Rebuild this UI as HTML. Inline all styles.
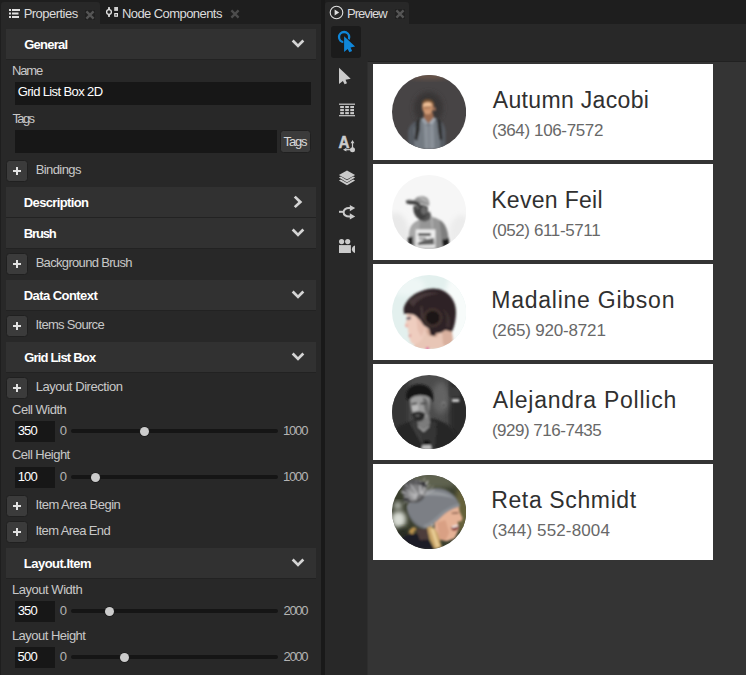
<!DOCTYPE html><html><head><meta charset="utf-8"><title>Properties</title><style>
*{box-sizing:border-box;margin:0;padding:0}
html,body{width:746px;height:675px;overflow:hidden;background:#1e1e1e;font-family:"Liberation Sans",sans-serif;font-size:13px;color:#c8c8c8}
.abs{position:absolute}
.t{position:absolute;white-space:nowrap}
#left{position:absolute;left:1px;top:24px;width:320px;height:651px;background:#282828}
#lefttab{position:absolute;left:1px;top:2px;width:99px;height:23px;background:#282828;border-radius:3px 3px 0 0}
.hdr{position:absolute;left:6px;width:310px;height:31px;background:#313131;border-bottom:1px solid #222}
.hdr svg{position:absolute;left:285px;top:9px}
.plus{position:absolute;left:6px;width:22px;height:22px;background:#3b3b3b;border:1px solid #202020;border-radius:3.5px}
.plus:before{content:"";position:absolute;left:5.8px;top:8.8px;width:8.4px;height:2.4px;background:#e2e2e2}
.plus:after{content:"";position:absolute;left:8.8px;top:5.8px;width:2.4px;height:8.4px;background:#e2e2e2}
.inp{position:absolute;left:15px;background:#171717}
.track{position:absolute;left:71px;width:207px;height:4px;border-radius:2px;background:#151515}
.thumb{position:absolute;width:9px;height:9px;border-radius:4.5px;background:#cccccc;box-shadow:0 0 0 0.8px #1b1b1b}
#divider{position:absolute;left:321px;top:0;width:4px;height:675px;background:#191919}
#right{position:absolute;left:325px;top:24px;width:421px;height:651px;background:#282828}
#righttab{position:absolute;left:325px;top:2px;width:84px;height:23px;background:#282828;border-radius:3px 3px 0 0}
#pv{position:absolute;left:367px;top:61px;width:379px;height:614px;background:#343434;border-left:1px solid #2e2e2e;border-top:1px solid #212121}
.item{position:absolute;left:373px;width:340.2px;height:95.5px;background:#fff}
</style></head><body>
<div id="lefttab"></div>
<div id="left"></div>
<svg class="abs" style="left:9px;top:9px" width="11" height="9" viewBox="0 0 11 9"><g fill="#e0e0e0"><rect x="0" y="0" width="2" height="2"/><rect x="3" y="0" width="8" height="2"/><rect x="0" y="3.5" width="2" height="2"/><rect x="3" y="3.5" width="6.5" height="2"/><rect x="0" y="7" width="2" height="2"/><rect x="3" y="7" width="7" height="2"/></g></svg>
<div id="t1" class="t" style="left:23.64px;top:6.00px;font-size:13px;line-height:16px;color:#dcdcdc;letter-spacing:-0.523px;">Properties</div>
<div class="abs" style="left:85px;top:10px;width:10px;height:10px;background:#212121"></div><svg class="abs" style="left:85px;top:10px" width="10" height="10" viewBox="0 0 10 10"><path d="M1.4 1.4L8.6 8.6M8.6 1.4L1.4 8.6" stroke="#555" stroke-width="2.3" fill="none"/></svg>
<svg class="abs" style="left:105px;top:6px" width="14" height="13" viewBox="105 6 14 13"><circle cx="109" cy="12" r="2.4" fill="none" stroke="#e4e4e4" stroke-width="1.3"/><g fill="#e4e4e4"><rect x="108.1" y="7.1" width="1.8" height="2.5"/><rect x="108.1" y="14.4" width="1.8" height="2.5"/><rect x="114.2" y="7" width="3.8" height="3.9" fill="#cfcfcf"/></g><rect x="114.8" y="13.6" width="2.6" height="2.6" fill="none" stroke="#e4e4e4" stroke-width="1.2"/></svg>
<div id="t2" class="t" style="left:121.90px;top:6.00px;font-size:13px;line-height:16px;color:#dcdcdc;letter-spacing:-0.562px;">Node Components</div>
<svg class="abs" style="left:230px;top:9px" width="10" height="10" viewBox="0 0 10 10"><path d="M1.4 1.4L8.6 8.6M8.6 1.4L1.4 8.6" stroke="#4c4c4c" stroke-width="2.3" fill="none"/></svg>
<div class="hdr" style="top:29px"><svg width="14" height="10" viewBox="0 0 14 10" style="left:285px;top:10px"><path d="M0.7 2.4L2.6 0.5L7 4.9L11.4 0.5L13.3 2.4L7 8.8Z" fill="#d4d4d4"/></svg></div>
<div id="t3" class="t" style="left:24.14px;top:37.00px;font-size:13px;line-height:16px;color:#ffffff;letter-spacing:-0.748px;font-weight:bold;">General</div>
<div id="t4" class="t" style="left:11.89px;top:63.10px;font-size:13px;line-height:16px;color:#c8c8c8;letter-spacing:-1.080px;">Name</div>
<div class="inp" style="top:82px;width:296px;height:23px"></div>
<div id="t5" class="t" style="left:17.66px;top:83.90px;font-size:13px;line-height:16px;color:#ffffff;letter-spacing:-0.618px;">Grid List Box 2D</div>
<div id="t6" class="t" style="left:12.52px;top:110.90px;font-size:13px;line-height:16px;color:#c8c8c8;letter-spacing:-1.642px;">Tags</div>
<div class="inp" style="top:130px;width:262px;height:23px"></div>
<div id="tagsbtn" class="abs" style="left:280px;top:130px;width:31px;height:23px;background:#3b3b3b;border:1px solid #202020;border-radius:3.5px"></div>
<div id="t7" class="t" style="left:283.62px;top:133.70px;font-size:13px;line-height:16px;color:#d8d8d8;letter-spacing:-1.225px;">Tags</div>
<div class="plus" style="top:160px"></div>
<div id="t8" class="t" style="left:35.64px;top:162.00px;font-size:13px;line-height:16px;color:#c8c8c8;letter-spacing:-0.574px;">Bindings</div>
<div class="hdr" style="top:187px"><svg width="10" height="14" viewBox="0 0 10 14" style="left:287px;top:8px"><path d="M2.7 0.7L9.3 6.9L2.7 13.1L0.8 11.2L5.3 6.9L0.8 2.6Z" fill="#d4d4d4"/></svg></div>
<div id="t9" class="t" style="left:23.79px;top:195.00px;font-size:13px;line-height:16px;color:#ffffff;letter-spacing:-0.629px;font-weight:bold;">Description</div>
<div class="hdr" style="top:218px"><svg width="14" height="10" viewBox="0 0 14 10" style="left:285px;top:10px"><path d="M0.7 2.4L2.6 0.5L7 4.9L11.4 0.5L13.3 2.4L7 8.8Z" fill="#d4d4d4"/></svg></div>
<div id="t10" class="t" style="left:23.79px;top:226.00px;font-size:13px;line-height:16px;color:#ffffff;letter-spacing:-1.137px;font-weight:bold;">Brush</div>
<div class="plus" style="top:253px"></div>
<div id="t11" class="t" style="left:35.64px;top:255.00px;font-size:13px;line-height:16px;color:#c8c8c8;letter-spacing:-0.675px;">Background Brush</div>
<div class="hdr" style="top:280px"><svg width="14" height="10" viewBox="0 0 14 10" style="left:285px;top:10px"><path d="M0.7 2.4L2.6 0.5L7 4.9L11.4 0.5L13.3 2.4L7 8.8Z" fill="#d4d4d4"/></svg></div>
<div id="t12" class="t" style="left:23.79px;top:288.00px;font-size:13px;line-height:16px;color:#ffffff;letter-spacing:-0.567px;font-weight:bold;">Data Context</div>
<div class="plus" style="top:315px"></div>
<div id="t13" class="t" style="left:35.55px;top:317.00px;font-size:13px;line-height:16px;color:#c8c8c8;letter-spacing:-0.683px;">Items Source</div>
<div class="hdr" style="top:342px"><svg width="14" height="10" viewBox="0 0 14 10" style="left:285px;top:10px"><path d="M0.7 2.4L2.6 0.5L7 4.9L11.4 0.5L13.3 2.4L7 8.8Z" fill="#d4d4d4"/></svg></div>
<div id="t14" class="t" style="left:24.14px;top:350.00px;font-size:13px;line-height:16px;color:#ffffff;letter-spacing:-0.801px;font-weight:bold;">Grid List Box</div>
<div class="plus" style="top:377px"></div>
<div id="t15" class="t" style="left:35.64px;top:379.00px;font-size:13px;line-height:16px;color:#c8c8c8;letter-spacing:-0.439px;">Layout Direction</div>
<div id="t16" class="t" style="left:12.02px;top:401.60px;font-size:13px;line-height:16px;color:#c8c8c8;letter-spacing:-0.491px;">Cell Width</div>
<div class="inp" style="top:421px;width:40px;height:21px"></div>
<div id="t17" class="t" style="left:17.63px;top:422.60px;font-size:13px;line-height:16px;color:#ffffff;letter-spacing:-0.823px;">350</div>
<div id="t18" class="t" style="left:59.63px;top:422.60px;font-size:13px;line-height:16px;color:#b4b4b4;letter-spacing:0.000px;">0</div>
<div class="track" style="top:429px"></div>
<div class="thumb" style="left:140.0px;top:426.9px"></div>
<div id="t19" class="t" style="left:283.00px;top:422.60px;font-size:13px;line-height:16px;color:#b4b4b4;letter-spacing:-1.170px;">1000</div>
<div id="t20" class="t" style="left:12.02px;top:447.40px;font-size:13px;line-height:16px;color:#c8c8c8;letter-spacing:-0.539px;">Cell Height</div>
<div class="inp" style="top:467px;width:40px;height:21px"></div>
<div id="t21" class="t" style="left:17.69px;top:468.60px;font-size:13px;line-height:16px;color:#ffffff;letter-spacing:-0.852px;">100</div>
<div id="t22" class="t" style="left:59.63px;top:468.60px;font-size:13px;line-height:16px;color:#b4b4b4;letter-spacing:0.000px;">0</div>
<div class="track" style="top:475px"></div>
<div class="thumb" style="left:90.5px;top:472.9px"></div>
<div id="t23" class="t" style="left:283.00px;top:468.60px;font-size:13px;line-height:16px;color:#b4b4b4;letter-spacing:-1.170px;">1000</div>
<div class="plus" style="top:495px"></div>
<div id="t24" class="t" style="left:35.55px;top:497.00px;font-size:13px;line-height:16px;color:#c8c8c8;letter-spacing:-0.521px;">Item Area Begin</div>
<div class="plus" style="top:521px"></div>
<div id="t25" class="t" style="left:35.55px;top:523.00px;font-size:13px;line-height:16px;color:#c8c8c8;letter-spacing:-0.603px;">Item Area End</div>
<div class="hdr" style="top:548px"><svg width="14" height="10" viewBox="0 0 14 10" style="left:285px;top:10px"><path d="M0.7 2.4L2.6 0.5L7 4.9L11.4 0.5L13.3 2.4L7 8.8Z" fill="#d4d4d4"/></svg></div>
<div id="t26" class="t" style="left:23.79px;top:556.00px;font-size:13px;line-height:16px;color:#ffffff;letter-spacing:-0.517px;font-weight:bold;">Layout.Item</div>
<div id="t27" class="t" style="left:11.89px;top:581.60px;font-size:13px;line-height:16px;color:#c8c8c8;letter-spacing:-0.456px;">Layout Width</div>
<div class="inp" style="top:601px;width:40px;height:21px"></div>
<div id="t28" class="t" style="left:17.63px;top:602.60px;font-size:13px;line-height:16px;color:#ffffff;letter-spacing:-0.823px;">350</div>
<div id="t29" class="t" style="left:59.63px;top:602.60px;font-size:13px;line-height:16px;color:#b4b4b4;letter-spacing:0.000px;">0</div>
<div class="track" style="top:609px"></div>
<div class="thumb" style="left:105.4px;top:606.9px"></div>
<div id="t30" class="t" style="left:283.49px;top:602.60px;font-size:13px;line-height:16px;color:#b4b4b4;letter-spacing:-1.336px;">2000</div>
<div id="t31" class="t" style="left:11.89px;top:627.60px;font-size:13px;line-height:16px;color:#c8c8c8;letter-spacing:-0.512px;">Layout Height</div>
<div class="inp" style="top:647px;width:40px;height:21px"></div>
<div id="t32" class="t" style="left:17.60px;top:648.60px;font-size:13px;line-height:16px;color:#ffffff;letter-spacing:-0.807px;">500</div>
<div id="t33" class="t" style="left:59.63px;top:648.60px;font-size:13px;line-height:16px;color:#b4b4b4;letter-spacing:0.000px;">0</div>
<div class="track" style="top:655px"></div>
<div class="thumb" style="left:120.2px;top:652.9px"></div>
<div id="t34" class="t" style="left:283.49px;top:648.60px;font-size:13px;line-height:16px;color:#b4b4b4;letter-spacing:-1.336px;">2000</div>
<div id="divider"></div>
<div id="righttab"></div>
<div id="right"></div>
<svg class="abs" style="left:329.3px;top:4.6px" width="15" height="15" viewBox="0 0 15 15"><circle cx="7.5" cy="7.5" r="6.3" fill="none" stroke="#e0e0e0" stroke-width="1.1"/><path d="M5.6 4.6L10.2 7.5L5.6 10.4Z" fill="#e0e0e0"/></svg>
<div id="t35" class="t" style="left:346.89px;top:6.00px;font-size:13px;line-height:16px;color:#dcdcdc;letter-spacing:-0.920px;">Preview</div>
<div class="abs" style="left:395px;top:9px;width:10px;height:10px;background:#212121"></div><svg class="abs" style="left:395px;top:9px" width="10" height="10" viewBox="0 0 10 10"><path d="M1.4 1.4L8.6 8.6M8.6 1.4L1.4 8.6" stroke="#555" stroke-width="2.3" fill="none"/></svg>
<div id="pv"></div>
<div class="abs" style="left:331px;top:26px;width:30px;height:32px;background:#1b1b1b;border-radius:3px"></div>
<svg class="abs" style="left:326px;top:24px" width="44" height="40" viewBox="326 24 44 40"><circle cx="344.1" cy="37.1" r="5.1" fill="none" stroke="#0f86d9" stroke-width="2.3"/><path d="M344.1 36.2L344.1 51.9L347.65 48.9L349.4 52.3L352.1 51L350.5 47.6L355.1 46.6Z" fill="#0f86d9" stroke="#1b1b1b" stroke-width="1.6" paint-order="stroke" stroke-linejoin="miter"/></svg><svg class="abs" style="left:326px;top:58px" width="44" height="34" viewBox="326 58 44 34"><path d="M339 67.8L339 84L342.9 80.9L344.6 84.3L347 83.2L345.5 79.8L350.7 78.7Z" fill="#cbcbcb"/></svg><svg class="abs" style="left:326px;top:96px" width="44" height="30" viewBox="326 96 44 30"><g fill="#cbcbcb"><rect x="339" y="103.6" width="16" height="1.2"/><rect x="339" y="115.1" width="16" height="1.2"/><rect x="340.2" y="106" width="3.7" height="2.1"/><rect x="345.2" y="106" width="3.7" height="2.1"/><rect x="350.3" y="106" width="3.7" height="2.1"/><rect x="340.2" y="109.05" width="3.7" height="2.1"/><rect x="345.2" y="109.05" width="3.7" height="2.1"/><rect x="350.3" y="109.05" width="3.7" height="2.1"/><rect x="340.2" y="112.1" width="3.7" height="2.1"/><rect x="345.2" y="112.1" width="3.7" height="2.1"/><rect x="350.3" y="112.1" width="3.7" height="2.1"/></g></svg><svg class="abs" style="left:326px;top:128px" width="44" height="30" viewBox="326 128 44 30"><text x="338.6" y="148" font-family="Liberation Sans, sans-serif" font-weight="bold" font-size="16.2" fill="#cbcbcb" textLength="11" lengthAdjust="spacingAndGlyphs" stroke="#cbcbcb" stroke-width="0.55">A</text><g fill="#cbcbcb"><circle cx="352.5" cy="149.7" r="2.5"/><rect x="351.9" y="142" width="1.2" height="7"/><path d="M352.5 139.9L354.4 143.2L350.6 143.2Z"/><rect x="345.5" y="149.1" width="6" height="1.2"/><path d="M343 149.7L346.4 147.8L346.4 151.6Z"/></g></svg><svg class="abs" style="left:326px;top:164px" width="44" height="28" viewBox="326 164 44 28"><g fill="#cbcbcb"><path d="M347 170.6L355.1 174.9L347 179.4L338.9 174.9Z"/><path d="M338.9 177.6L340.9 176.6L347 180.2L353.1 176.6L355.1 177.6L347 182.4Z"/><path d="M338.9 180.5L340.9 179.5L347 183.1L353.1 179.5L355.1 180.5L347 185.3Z"/></g></svg><svg class="abs" style="left:326px;top:198px" width="44" height="28" viewBox="326 198 44 28"><g fill="none" stroke="#cbcbcb" stroke-width="2"><path d="M339 211.8H343.8"/><path d="M350.5 208.1C345.5 207.6 343.6 209.8 343.6 212.2C343.6 214.6 345.5 216.9 350.5 216.4"/></g><g fill="#cbcbcb"><path d="M355.2 208.1L349.8 204.9L349.8 211.3Z"/><path d="M355.2 216.4L349.8 213.2L349.8 219.6Z"/></g></svg><svg class="abs" style="left:326px;top:232px" width="44" height="28" viewBox="326 232 44 28"><g fill="#cbcbcb"><circle cx="341.6" cy="241.6" r="2.6"/><circle cx="347.7" cy="241.6" r="2.6"/><rect x="339" y="245.1" width="11.9" height="7.9"/><path d="M355 245.4L355 252.9C353.5 252.6 351.9 251.4 351.9 249.15C351.9 246.9 353.5 245.7 355 245.4Z"/></g></svg>
<div class="item" style="top:64px"></div>
<svg class="abs" style="left:391.6px;top:74.6px" width="74.2" height="74.2" viewBox="30 30 610 610"><defs><clipPath id="c0"><circle cx="335" cy="335" r="305"/></clipPath><filter id="b0" x="-20%" y="-20%" width="140%" height="140%"><feGaussianBlur stdDeviation="7"/></filter><filter id="bb0" x="-30%" y="-30%" width="160%" height="160%"><feGaussianBlur stdDeviation="22"/></filter></defs><g clip-path="url(#c0)"><rect x="0" y="0" width="675" height="675" fill="#474445"/><ellipse cx="335" cy="30" rx="180" ry="35" fill="#6a5548" filter="url(#bb0)"/><ellipse cx="330" cy="300" rx="120" ry="130" fill="#383636" filter="url(#bb0)"/><g filter="url(#b0)"><path d="M165 640L162 500C168 445 200 418 265 392L330 425L392 388C440 405 466 440 470 500L470 640Z" fill="#565c63"/><path d="M215 640L210 470C230 430 260 410 285 402L330 430L380 400C400 410 420 430 425 470L425 640Z" fill="#737a82"/><path d="M290 430L330 455L372 425L380 640L300 640Z" fill="#8a9199"/><path d="M330 455L336 455L338 640L332 640Z" fill="#6a7078"/><path d="M268 392L296 376L330 428L300 440Z" fill="#9aa2aa"/><path d="M392 388L366 374L330 428L362 436Z" fill="#a4acb4"/><path d="M228 404L262 390L258 480L238 570L215 560Z" fill="#2e2d2d"/><path d="M402 390L432 404L445 560L422 565L408 480Z" fill="#2e2d2d"/><path d="M292 338L366 338L374 380L330 428L290 380Z" fill="#9a6a50"/><ellipse cx="324" cy="296" rx="46" ry="58" fill="#c8906a"/><ellipse cx="318" cy="272" rx="36" ry="28" fill="#f0c096"/><ellipse cx="322" cy="335" rx="28" ry="16" fill="#d09a74"/><path d="M290 292L350 286L352 298L292 304Z" fill="#9a6a4c"/><ellipse cx="380" cy="310" rx="10" ry="16" fill="#b07a5c"/><path d="M278 280C272 240 300 226 332 230C364 234 384 258 378 296C368 268 350 252 322 254C300 256 286 266 278 280Z" fill="#7a5436"/></g></g></svg>
<div id="t36" class="t" style="left:492.81px;top:85.63px;font-size:23px;line-height:29px;color:#303030;letter-spacing:0.330px;">Autumn Jacobi</div>
<div id="t37" class="t" style="left:491.89px;top:120.11px;font-size:17px;line-height:21px;color:#686868;letter-spacing:-0.367px;">(364) 106-7572</div>
<div class="item" style="top:164px"></div>
<svg class="abs" style="left:391.6px;top:174.6px" width="74.2" height="74.2" viewBox="30 30 610 610"><defs><clipPath id="c1"><circle cx="335" cy="335" r="305"/></clipPath><filter id="b1" x="-20%" y="-20%" width="140%" height="140%"><feGaussianBlur stdDeviation="7"/></filter><filter id="bb1" x="-30%" y="-30%" width="160%" height="160%"><feGaussianBlur stdDeviation="22"/></filter></defs><g clip-path="url(#c1)"><rect x="0" y="0" width="675" height="675" fill="#f6f6f6"/><ellipse cx="60" cy="520" rx="110" ry="180" fill="#e9e9e9" filter="url(#bb1)"/><ellipse cx="600" cy="520" rx="100" ry="160" fill="#ececec" filter="url(#bb1)"/><g filter="url(#b1)"><path d="M160 640L170 520C175 450 200 420 260 395L300 410L350 375C420 385 475 420 490 520L500 640Z" fill="#969696"/><path d="M175 520C180 460 205 430 260 405L250 520L230 640L165 640Z" fill="#a8a8a8"/><path d="M420 400C460 420 480 460 490 520L497 560L440 575L430 480Z" fill="#7e7e7e"/><path d="M158 545L200 535L205 610L165 600Z" fill="#262626"/><path d="M440 565L497 550L500 605L450 625Z" fill="#1e1e1e"/><rect x="225" y="478" width="162" height="150" fill="#eeeeee"/><rect x="245" y="508" width="104" height="24" fill="#4a4a4a"/><rect x="250" y="545" width="60" height="14" fill="#777"/><path d="M300 560L375 548L378 602L240 607L245 585Z" fill="#606060"/><path d="M250 360L340 330L360 385L300 415L255 400Z" fill="#555"/><path d="M345 370L362 372L368 470L356 470Z" fill="#b0b0b0"/><path d="M205 288C232 272 300 270 322 292C332 330 318 378 280 398C247 402 218 368 208 330Z" fill="#404040"/><ellipse cx="292" cy="322" rx="24" ry="34" fill="#6a6a6a"/><ellipse cx="240" cy="300" rx="18" ry="12" fill="#666"/><path d="M205 275C200 225 240 200 285 205C325 210 345 245 335 285C300 270 250 265 205 275Z" fill="#959595"/><path d="M250 215C280 208 320 225 330 262C300 245 270 238 250 215Z" fill="#b4b4b4"/><path d="M143 245C160 225 200 232 250 255L268 282C220 268 175 275 150 262Z" fill="#383838"/><path d="M143 243C165 228 200 230 240 248C200 240 170 242 143 243Z" fill="#a4a4a4"/></g></g></svg>
<div id="t38" class="t" style="left:491.22px;top:185.63px;font-size:23px;line-height:29px;color:#303030;letter-spacing:0.304px;">Keven Feil</div>
<div id="t39" class="t" style="left:491.89px;top:220.11px;font-size:17px;line-height:21px;color:#686868;letter-spacing:-0.386px;">(052) 611-5711</div>
<div class="item" style="top:264px"></div>
<svg class="abs" style="left:391.6px;top:274.6px" width="74.2" height="74.2" viewBox="30 30 610 610"><defs><clipPath id="c2"><circle cx="335" cy="335" r="305"/></clipPath><filter id="b2" x="-20%" y="-20%" width="140%" height="140%"><feGaussianBlur stdDeviation="7"/></filter><filter id="bb2" x="-30%" y="-30%" width="160%" height="160%"><feGaussianBlur stdDeviation="22"/></filter></defs><g clip-path="url(#c2)"><rect x="0" y="0" width="675" height="675" fill="#e3f0ee"/><ellipse cx="570" cy="300" rx="110" ry="300" fill="#f7fbfa" filter="url(#bb2)"/><ellipse cx="150" cy="120" rx="150" ry="80" fill="#eef6f5" filter="url(#bb2)"/><g filter="url(#b2)"><path d="M240 440L520 440L528 560L545 640L200 640L215 600Z" fill="#e8c6b6"/><path d="M440 490L520 480L535 600L500 640L450 600Z" fill="#d9b09e"/><path d="M300 470L420 500L400 540L330 530Z" fill="#d2a896"/><path d="M150 340L300 330L310 480L275 565L225 602C195 602 180 587 178 562L168 537L175 517L160 497L165 472L135 446L150 400Z" fill="#efcdbf"/><path d="M230 380L300 370L305 470L270 540L240 480Z" fill="#e6bfb0"/><path d="M150 380L186 372L183 393L152 397Z" fill="#5b5060"/><path d="M140 440L160 436L158 460L142 458Z" fill="#e8a8a0"/><path d="M166 522L188 520L186 535L170 537Z" fill="#d88a88"/><path d="M125 312C138 232 228 150 370 140C482 140 562 232 556 342C553 420 538 470 522 497L470 482L432 505L392 508L382 534L345 524L335 474L290 444L262 402L232 374L205 354L128 348Z" fill="#2d2425"/><path d="M165 250C235 182 330 162 420 182C330 188 250 218 205 292Z" fill="#47393a"/><path d="M264 290L280 286L288 400L272 392Z" fill="#4a3a3a"/><path d="M440 300C500 340 520 400 500 470L470 450C490 400 480 350 440 300Z" fill="#3e3031"/><circle cx="365" cy="380" r="80" fill="#3f302e"/><circle cx="365" cy="380" r="57" fill="#1d1617"/><path d="M308 628L330 623L336 646L310 646Z" fill="#e060a0"/></g></g></svg>
<div id="t40" class="t" style="left:491.22px;top:285.63px;font-size:23px;line-height:29px;color:#303030;letter-spacing:0.758px;">Madaline Gibson</div>
<div id="t41" class="t" style="left:491.89px;top:320.11px;font-size:17px;line-height:21px;color:#686868;letter-spacing:-0.176px;">(265) 920-8721</div>
<div class="item" style="top:364px"></div>
<svg class="abs" style="left:391.6px;top:374.6px" width="74.2" height="74.2" viewBox="30 30 610 610"><defs><clipPath id="c3"><circle cx="335" cy="335" r="305"/></clipPath><filter id="b3" x="-20%" y="-20%" width="140%" height="140%"><feGaussianBlur stdDeviation="7"/></filter><filter id="bb3" x="-30%" y="-30%" width="160%" height="160%"><feGaussianBlur stdDeviation="22"/></filter></defs><g clip-path="url(#c3)"><rect x="0" y="0" width="675" height="675" fill="#4c4c4c"/><rect x="0" y="0" width="170" height="675" fill="#363636" filter="url(#bb3)"/><rect x="500" y="60" width="170" height="600" fill="#2a2a2a" filter="url(#bb3)"/><ellipse cx="430" cy="220" rx="70" ry="130" fill="#636363" filter="url(#bb3)"/><g filter="url(#b3)"><rect x="522" y="228" width="62" height="24" rx="10" fill="#cfcfcf"/><ellipse cx="455" cy="272" rx="20" ry="26" fill="#787878"/><ellipse cx="455" cy="278" rx="9" ry="11" fill="#444"/><rect x="500" y="130" width="90" height="80" fill="#3a3a3a"/><path d="M40 640L60 470C110 430 170 415 220 395L280 470L340 385C420 390 520 440 560 520L600 640Z" fill="#262626"/><path d="M175 425L222 402L292 560L272 600Z" fill="#3a3a3a"/><path d="M340 400L400 420L380 520L345 470Z" fill="#343434"/><path d="M262 470L340 440L400 470L380 640L290 640Z" fill="#353535"/><path d="M228 392L335 350L345 430L290 478L242 440Z" fill="#7c7c7c"/><path d="M240 440L290 478L340 440L335 460L290 500L245 462Z" fill="#9a9a9a"/><path d="M180 220C205 195 300 190 338 220C348 262 343 330 318 372C290 405 242 410 213 382C190 340 177 272 180 220Z" fill="#9c9c9c"/><path d="M282 215C338 212 350 300 323 370C298 340 290 280 282 215Z" fill="#6c6c6c"/><ellipse cx="222" cy="300" rx="26" ry="36" fill="#b8b8b8"/><path d="M194 342C228 326 272 328 300 344C310 384 278 414 242 412C213 406 196 380 194 342Z" fill="#2c2c2c"/><ellipse cx="240" cy="364" rx="18" ry="6" fill="#7a7a7a"/><path d="M190 262L235 256L236 270L192 276Z" fill="#3a3a3a"/><path d="M262 258L310 256L310 270L264 272Z" fill="#444"/><path d="M148 225C132 150 195 98 272 108C340 114 382 170 366 255C352 222 332 202 300 197C250 188 200 198 170 240Z" fill="#191919"/><path d="M278 608L348 603L358 645L272 645Z" fill="#bdbdbd"/><rect x="292" y="568" width="50" height="38" fill="#181818"/></g></g></svg>
<div id="t42" class="t" style="left:492.81px;top:385.63px;font-size:23px;line-height:29px;color:#303030;letter-spacing:0.759px;">Alejandra Pollich</div>
<div id="t43" class="t" style="left:491.89px;top:420.11px;font-size:17px;line-height:21px;color:#686868;letter-spacing:-0.489px;">(929) 716-7435</div>
<div class="item" style="top:464px"></div>
<svg class="abs" style="left:391.6px;top:474.6px" width="74.2" height="74.2" viewBox="30 30 610 610"><defs><clipPath id="c4"><circle cx="335" cy="335" r="305"/></clipPath><filter id="b4" x="-20%" y="-20%" width="140%" height="140%"><feGaussianBlur stdDeviation="7"/></filter><filter id="bb4" x="-30%" y="-30%" width="160%" height="160%"><feGaussianBlur stdDeviation="22"/></filter></defs><g clip-path="url(#c4)"><rect x="0" y="0" width="675" height="675" fill="#3a3e2e"/><ellipse cx="400" cy="70" rx="230" ry="70" fill="#5e6250" filter="url(#bb4)"/><ellipse cx="615" cy="300" rx="70" ry="210" fill="#66623a" filter="url(#bb4)"/><ellipse cx="85" cy="395" rx="62" ry="70" fill="#d8dcd4" filter="url(#bb4)"/><ellipse cx="78" cy="282" rx="34" ry="34" fill="#b8bcb4" filter="url(#bb4)"/><ellipse cx="120" cy="505" rx="50" ry="40" fill="#262c20" filter="url(#bb4)"/><g filter="url(#b4)"><path d="M110 548C170 500 260 500 320 540L380 640L120 640Z" fill="#1c1e27"/><path d="M225 475L320 470L335 560L260 565Z" fill="#4e3c3a"/><path d="M380 300L580 285L585 330L610 385L600 410L570 415L580 470L560 520L545 550L480 575L420 560L380 470Z" fill="#e6b296"/><path d="M400 420L470 400L500 500L470 570L420 560Z" fill="#d9a084"/><path d="M515 455C545 450 570 440 580 430L575 470C560 490 535 495 520 480Z" fill="#8a3a38"/><path d="M520 452L575 436L576 452L528 466Z" fill="#f4f0ec"/><path d="M520 340L575 335L576 346L522 350Z" fill="#7a5040"/><path d="M315 450C350 440 390 470 410 520L440 625L380 640L340 560Z" fill="#c9a468"/><path d="M165 500C185 455 215 450 230 470L200 520Z" fill="#b8904e"/><path d="M345 470L375 470L420 620L395 625Z" fill="#e8cc94"/><ellipse cx="362" cy="440" rx="9" ry="14" fill="#e8e8ea"/><path d="M150 300C170 215 290 140 400 138C500 140 575 210 588 290C540 300 480 330 440 370C400 410 350 455 300 470C240 470 170 420 150 300Z" fill="#7b7f85"/><path d="M250 200C330 150 450 150 545 225C450 195 340 198 250 200Z" fill="#95999d"/><path d="M160 330C200 420 260 450 300 468C250 470 180 420 160 330Z" fill="#63666a"/><path d="M300 470C350 455 400 410 440 370C480 330 540 300 588 290L585 262C530 275 470 305 425 345C385 385 340 425 290 440Z" fill="#8b8f94"/><circle cx="212" cy="160" r="100" fill="#58585a"/><circle cx="225" cy="170" r="60" fill="#7a7a7c"/><path d="M232 236L147 284" stroke="#8e8e90" stroke-width="5.4" stroke-linecap="round" fill="none"/><path d="M229 229L123 263" stroke="#b8b8ba" stroke-width="5.4" stroke-linecap="round" fill="none"/><path d="M227 222L121 233" stroke="#b8b8ba" stroke-width="8.7" stroke-linecap="round" fill="none"/><path d="M227 214L131 204" stroke="#cacacc" stroke-width="7.1" stroke-linecap="round" fill="none"/><path d="M229 207L107 168" stroke="#cacacc" stroke-width="8.3" stroke-linecap="round" fill="none"/><path d="M232 200L148 152" stroke="#cacacc" stroke-width="8.7" stroke-linecap="round" fill="none"/><path d="M236 195L140 108" stroke="#cacacc" stroke-width="5.8" stroke-linecap="round" fill="none"/><path d="M241 190L182 108" stroke="#cacacc" stroke-width="8.5" stroke-linecap="round" fill="none"/><path d="M248 186L211 104" stroke="#8e8e90" stroke-width="7.4" stroke-linecap="round" fill="none"/><path d="M255 184L231 73" stroke="#8e8e90" stroke-width="5.7" stroke-linecap="round" fill="none"/><path d="M262 183L262 83" stroke="#d6d6d8" stroke-width="8.8" stroke-linecap="round" fill="none"/><path d="M269 184L297 55" stroke="#cacacc" stroke-width="5.0" stroke-linecap="round" fill="none"/><path d="M276 186L324 80" stroke="#d6d6d8" stroke-width="8.5" stroke-linecap="round" fill="none"/><path d="M283 190L339 112" stroke="#cacacc" stroke-width="6.7" stroke-linecap="round" fill="none"/><path d="M288 195L369 122" stroke="#cacacc" stroke-width="5.6" stroke-linecap="round" fill="none"/><path d="M292 200L378 151" stroke="#b8b8ba" stroke-width="8.2" stroke-linecap="round" fill="none"/><path d="M232 92L300 84L322 134L288 124Z" fill="#3a3a3c"/><path d="M110 232L150 252L200 257L150 212Z" fill="#464648"/></g></g></svg>
<div id="t44" class="t" style="left:491.22px;top:485.63px;font-size:23px;line-height:29px;color:#303030;letter-spacing:0.627px;">Reta Schmidt</div>
<div id="t45" class="t" style="left:491.89px;top:520.11px;font-size:17px;line-height:21px;color:#686868;letter-spacing:0.133px;">(344) 552-8004</div>
</body></html>
